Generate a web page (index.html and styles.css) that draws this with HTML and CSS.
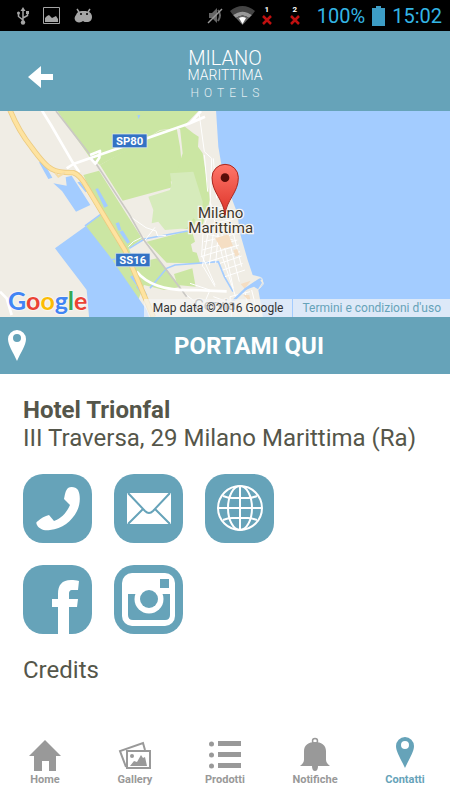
FILE: index.html
```html
<!DOCTYPE html>
<html lang="it">
<head>
  <meta charset="UTF-8">
  <meta name="viewport" content="width=device-width, initial-scale=1.0">
  <title>Contatti - Milano Marittima Hotels</title>
  <link rel="stylesheet" href="styles.css">
</head>
<body>
  <div class="status-bar">
    <div class="status-left">
      <svg width="12" height="18" viewBox="0 0 12 18" fill="none" stroke="#a5a5a5" stroke-width="1.5"><path d="M6 2v14M1.500 7v2.500L6 13M10.500 6v2.500L6 11"/><path d="M3.500 4L6 0l2.500 4z" fill="#a5a5a5" stroke="none"/><circle cx="6" cy="15.500" r="2.200" fill="#a5a5a5" stroke="none"/><circle cx="1.500" cy="6" r="1.500" fill="#a5a5a5" stroke="none"/><path d="M9 4h3v3H9z" fill="#a5a5a5" stroke="none"/></svg>
      <svg width="17" height="17" viewBox="0 0 17 17"><path d="M.5.500h16v16H.5z" fill="none" stroke="#a5a5a5"/><path d="M2 15v-4l2-2 2-1 3 3 2-1 2-1 2 3v3z" fill="#a5a5a5"/></svg>
      <svg width="20" height="16" viewBox="0 0 20 16"><path d="M3 1l2 3M16 1l-2 3" stroke="#a5a5a5" stroke-width="1.500"/><path d="M3 5C5 3 7 3 10 3c5 0 8 2 8 6 0 3-2 5-5 5-2 0-3 0-4-1-2 2-7 2-8-1-1-2 0-4 1-5z" fill="#a5a5a5"/><circle cx="7" cy="6" r="1" fill="#000"/><circle cx="13" cy="6" r="1" fill="#000"/></svg>
    </div>
    <div class="status-right">
      <svg width="16" height="18" viewBox="0 0 16 18"><path d="M2 6h3l5-5v15l-5-5H2z" fill="#666"/><path d="M11 3q4 5 0 11" fill="none" stroke="#666" stroke-width="2"/><path d="M1 16L15 2" stroke="#999" stroke-width="1.500"/></svg>
      <svg width="25" height="19" viewBox="0 0 25 19"><path d="M0 5q12.500-10 25 0l-3 4q-9.500-7-19 0z" fill="#444"/><path d="M3 9q9.500-7 19 0l-3 3q-6.500-5-13 0z" fill="#999"/><path d="M6 12q6.500-5 13 0l-6.500 7z" fill="#666"/><path d="M9 12q3.500-2 7 0l-3.500 6z" fill="#fff"/></svg>
      <div class="sims">
        <div class="sim"><span>1</span><svg width="10" height="10" viewBox="0 0 10 10"><path d="M1 1l8 8M9 1L1 9" stroke="#c01010" stroke-width="2.500"/></svg></div>
        <div class="sim"><span>2</span><svg width="10" height="10" viewBox="0 0 10 10"><path d="M1 1l8 8M9 1L1 9" stroke="#c01010" stroke-width="2.500"/></svg></div>
      </div>
      <span class="battery-text">100%</span>
      <svg width="13" height="20" viewBox="0 0 13 20"><path d="M0 2h4V0h5v2h4v18H0z" fill="#3d9dc5"/></svg>
      <span class="clock">15:02</span>
    </div>
  </div>

  <header class="header">
    <button class="back" aria-label="Indietro"><svg width="26" height="22" viewBox="0 0 26 22"><path d="M0 11L13 0v8h12v6H13v8z" fill="#fff"/></svg></button>
    <div class="logo">
      <span class="logo-milano">MILANO</span>
      <span class="logo-marittima">MARITTIMA</span>
      <span class="logo-hotels">HOTELS</span>
    </div>
  </header>

  <div class="map">
    <svg class="map-drawing" viewBox="0 3 1350 618" preserveAspectRatio="xMidYMid slice">
      <defs>
        <linearGradient id="pin" x1="0" y1="0" x2="0" y2="1"><stop offset="0" stop-color="#ff766a"/><stop offset="1" stop-color="#dc3227"/></linearGradient>
      </defs>
      <path d="M0 0h1350v630H0z" fill="#f0ede5"/>
      <!-- parks -->
      <path d="M170 0H598L560 40 548 60 530 55 480 60 400 110 300 165 268 140z" fill="#cbe6a3"/>
      <path d="M300 165L480 62 530 55 540 110 548 185 512 215 517 232 368 272z" fill="#cbe6a3"/>
      <path d="M555 50l25 20 16 10-2 30 14 20 22 140-22 75-18-25-10 40-65-10-5-40 10-90 28-90-8-75z" fill="#cbe6a3"/>
      <path d="M250 195l47-13 130 205-40 28 15 45 70-15 70 85-50 10-60-15-25 65-30-15L258 348l45-35z" fill="#cbe6a3"/>
      <path d="M440 395l135-35 10 35-12 8 5 22 12 3 10 32-100-2zM522 492l55-17 10 55-55-5z" fill="#cbe6a3"/>
      <path d="M510 190l70-5 28 90-3 70-25-20-20 30-65 5-20-25-20 5 5-40-15-40 65-20 5-20z" fill="#d6ebbb"/>
      <!-- water -->
      <path d="M648 0H1350V630H790L783 585 775 540 790 518 785 502 758 495 743 450 720 370 712 310 697 270 672 210 655 110z" fill="#a3ccff"/>
      <path d="M165 415L258 348 330 440 440 600 450 630H268L260 540 245 520z" fill="#a3ccff"/>
      <path d="M117 157l13-2 27 48-12 4zM160 220l40 7-3-25 18-5 56 88-43 20-42-62zM240 215l22 28-5 4-25-30zM286 237l8-2 30 53-11 5zM347 340l10-3 7 23-9 2zM358 366l10-5 22 35-8 5zM390 500l12-6 15 25-8 7zM408 530l14-10 20 35-8 10zM412 15h9l-5 13z" fill="#a3ccff"/>
      <path d="M255 348l50-37M388 415l45-28 130-24M450 535l50-60 25-10 130-10 18 45 26 45M390 440l-60 10" fill="none" stroke="#a3ccff" stroke-width="5"/>
      <!-- streets of the town -->
      <g fill="none" stroke="#fff" stroke-width="3">
        <path d="M598 15l15 110 22 20-5 150-20 60-5 80 40 90M613 135l10 110M640 145l10 120M632 280l35 160 40 120M612 395l100-25M607 420l105-30M602 440l115-35M610 460l110-35M627 350l-20 120M640 370l-12 95M655 370l-8 90M610 370l90 20M665 370l35 165M680 360l38 155M700 370l25 100M625 300l50-10M630 320l50-8M640 340l60-12M610 470l35 60M570 520l60 20-30 70M540 540l90 70M660 460l65-22M668 480l60-20M675 500l60-20M690 560l5 60M735 545l15 80M755 540l20 80M640 560l55 20M690 560l60-15"/>
        <path d="M388 318l50 35 30 10 5 15 25-2M465 352l-35 45M385 410l15-15 30-15"/>
      </g>
      <path d="M645 385l40-12 14 35-35 8zM700 420l12-3 6 18-12 4zM722 522l30-10-18 24zM730 555h18l5 25z" fill="#f5dec3"/>
      <path d="M697 575l40-38 50-34" fill="none" stroke="#a3ccff" stroke-width="7"/>
      <path d="M735 540l25-20 18-12 8 10-12 20-12-8z" fill="#a3ccff"/>
      <path d="M770 503l15 1 5 18-12 14" fill="none" stroke="#f0ede5" stroke-width="3"/>
      <!-- railway -->
      <path d="M168 3l105 135 115 175 42 75 130 172" fill="none" stroke="#cac8c4" stroke-width="5"/>
      <!-- main roads -->
      <path d="M125 0l28 45 65 112 20 30M200 175l20-13 350-122 33-37M570 40l45-20M270 135l30-12-2 20-12 18-16-18M410 485q50 60 170 55l100 4M0 545l20 20 15 50" fill="none" stroke="#fff" stroke-width="8" stroke-linejoin="round"/>
      <path d="M30 0q25 62 65 112 40 55 60 65 20 12 65 11 20 6 40 43l115 190 85 200" fill="none" stroke="#eccb80" stroke-width="16"/>
      <path d="M30 0q25 62 65 112 40 55 60 65 20 12 65 11 20 6 40 43l115 190 85 200" fill="none" stroke="#fee3a0" stroke-width="11"/>
      <path d="M165 188l10 12 20-12" fill="none" stroke="#f5dca6" stroke-width="6"/>
      <!-- road signs -->
      <path d="M337 72h104v41H337zM347 430h103v40H347z" fill="#3372c4" stroke="#e4edf5" stroke-width="2"/>
      <text class="road" x="389" y="105">SP80</text>
      <text class="road" x="398" y="462">SS16</text>
      <text class="place place-faded" x="645" y="600">Cervia</text>
      <text class="place"><tspan x="662" y="323">Milano</tspan><tspan x="662" y="368">Marittima</tspan></text>
      <path d="M675 316C672 270 636 248 636 203a39 39 0 0 1 79-1C716 248 678 270 675 316z" fill="url(#pin)" stroke="#a9281f" stroke-width="3"/>
      <circle cx="675" cy="203" r="13" fill="#590d09"/>
    </svg>
    <div class="google"><span class="g-blue">G</span><span class="g-red">o</span><span class="g-yellow">o</span><span class="g-blue">g</span><span class="g-green">l</span><span class="g-red">e</span></div>
    <div class="map-credits">
      <span>Map data ©2016 Google</span>
      <a href="#">Termini e condizioni d'uso</a>
    </div>
  </div>

  <button class="directions">
    <svg width="18" height="32" viewBox="0 0 18 32"><path fill-rule="evenodd" d="M9 0a9 9 0 0 1 9 9c0 6-5 13-9 22C5 22 0 15 0 9a9 9 0 0 1 9-9zm0 4a4 4 0 1 0 0 8 4 4 0 0 0 0-8z" fill="#fff"/></svg>
    <span>PORTAMI QUI</span>
  </button>

  <main class="content">
    <h1>Hotel Trionfal</h1>
    <p>III Traversa, 29 Milano Marittima (Ra)</p>
    <div class="links">
      <a href="#" aria-label="Telefono">
        <svg viewBox="0 0 69 69"><path d="M45 14c3-2 8-1 10 2 3 6 2 15-1 21-5 10-15 18-27 19-6 1-11-1-13-5-1-2-1-3 1-4 3-3 7-5 11-6l5 6c8-3 13-9 16-16l-6-6c1-4 1-8 4-11z"/></svg>
      </a>
      <a href="#" aria-label="Email">
        <svg viewBox="0 0 69 69"><path d="M13 19h44v31H13z"/><path d="M14 19l17 18q4 4 8 0l17-18M14 50l15-15M56 50L41 35" fill="none" stroke="#66a3b9" stroke-width="2"/></svg>
      </a>
      <a href="#" aria-label="Sito web">
        <svg viewBox="0 0 69 69"><g fill="none" stroke="#fff" stroke-width="2"><circle cx="35" cy="34" r="22"/><ellipse cx="35" cy="34" rx="12" ry="22"/><path d="M35 12v44M13 34h44M18 22q5 2 9 2h16q4 0 9-2M18 46q5-2 9-2h16q4 0 9 2"/></g></svg>
      </a>
      <a href="#" aria-label="Facebook">
        <svg viewBox="0 0 69 69"><path d="M35 69V42h-6v-8h6v-5c0-9 4-14 13-14 3 0 5 0 8 1l-1 9h-5c-4 0-4 2-4 5v4h9l-1 8h-8v27z"/></svg>
      </a>
      <a href="#" aria-label="Instagram">
        <svg viewBox="0 0 69 69"><rect x="8" y="8" width="53" height="53" rx="10"/><path d="M14 29h42v21q0 5-5 5H19q-5 0-5-5zM46 14h9v9h-9z" fill="#66a3b9"/><circle cx="35" cy="34" r="14.500"/><circle cx="35" cy="34" r="9" fill="#66a3b9"/></svg>
      </a>
    </div>
    <a class="credits" href="#">Credits</a>
  </main>

  <nav class="tabs">
    <a href="#">
      <svg width="32" height="32" viewBox="0 0 32 32"><path d="M16 1l16 16h-5v15h-7V22h-7v10H5V17H0z"/></svg>
      <span>Home</span>
    </a>
    <a href="#">
      <svg width="34" height="32" viewBox="0 0 34 32"><path d="M8 28L2 12 25 4l2 7" fill="none" stroke="#999" stroke-width="2"/><path d="M9 12h23v17H9z" fill="#fff" stroke="#999" stroke-width="2"/><circle cx="14" cy="17" r="2"/><path d="M12 27l4-5 3 1 4-7 2 3 2-1 2 9z"/></svg>
      <span>Gallery</span>
    </a>
    <a href="#">
      <svg width="32" height="32" viewBox="0 0 32 32"><circle cx="2.500" cy="5" r="2.500"/><circle cx="2.500" cy="16" r="2.500"/><circle cx="2.500" cy="27" r="2.500"/><path d="M9 2h23v5H9zM9 13h23v5H9zM9 24h23v5H9z"/></svg>
      <span>Prodotti</span>
    </a>
    <a href="#">
      <svg width="30" height="34" viewBox="0 0 30 34"><circle cx="15" cy="4" r="2.500" fill="none" stroke="#999" stroke-width="1.500"/><path d="M4 14C4 8 9 5 15 5s11 3 11 9v9q0 3 4 6H18q0 5-3 5t-3-5H0q4-3 4-6z"/></svg>
      <span>Notifiche</span>
    </a>
    <a href="#" class="active">
      <svg width="18" height="34" viewBox="0 0 18 34"><path fill-rule="evenodd" d="M9 0a9 9 0 0 1 9 9c0 6-5 13-9 22C5 22 0 15 0 9a9 9 0 0 1 9-9zm0 4a4 4 0 1 0 0 8 4 4 0 0 0 0-8z"/></svg>
      <span>Contatti</span>
    </a>
  </nav>
</body>
</html>
```

FILE: styles.css
```css
* {
  box-sizing: border-box;
}
body {
  font-family: Roboto, Arial, sans-serif;
  background-color: #fff;
  color: #55564a;
  margin: 0;
  min-height: 100vh;
  display: flex;
  flex-direction: column;
}
a {
  color: inherit;
  text-decoration: none;
}
button {
  border: none;
  padding: 0;
  background: none;
  font-family: inherit;
  cursor: pointer;
}
svg {
  display: block;
}

/* status bar */
.status-bar {
  background-color: #000;
  color: #33b5e5;
  height: 31px;
  padding: 0 8px 0 17px;
  display: flex;
  justify-content: space-between;
  align-items: center;
}
.status-left {
  display: flex;
  align-items: center;
  gap: 14px;
}
.status-right {
  display: flex;
  align-items: center;
  gap: 7px;
  font-size: 20px;
}
.sims {
  display: flex;
  gap: 18px;
  margin-right: 10px;
}
.sim {
  display: flex;
  flex-direction: column;
  align-items: center;
  gap: 1px;
  color: #fff;
  font-size: 8px;
  line-height: 8px;
  font-weight: bold;
}

/* header */
.header {
  background-color: #66a3b9;
  height: 80px;
  padding: 0 28px;
  display: grid;
  grid-template-columns: 1fr auto 1fr;
  align-items: center;
}
.back {
  justify-self: start;
  padding-top: 12px;
}
.logo {
  display: flex;
  flex-direction: column;
  align-items: center;
  color: #fff;
  padding-top: 6px;
}
.logo-milano {
  font-size: 20px;
  line-height: 20px;
  font-weight: 300;
}
.logo-marittima {
  font-size: 14px;
  line-height: 14px;
  font-weight: 300;
}
.logo-hotels {
  font-size: 12px;
  line-height: 14px;
  font-weight: 300;
  letter-spacing: 5px;
  padding-left: 5px;
  margin-top: 4px;
  opacity: 0.8;
}

/* map */
.map {
  position: relative;
}
.map-drawing {
  width: 100%;
}
.road {
  font-size: 34px;
  font-weight: bold;
  fill: #fff;
  text-anchor: middle;
}
.place {
  font-size: 45px;
  fill: #40382c;
  stroke: #f7f5f0;
  stroke-width: 8px;
  paint-order: stroke;
  text-anchor: middle;
}
.place-faded {
  fill: #555;
}
.google {
  position: absolute;
  left: 8px;
  bottom: 2px;
  font-family: Lato, sans-serif;
  font-size: 25px;
  line-height: 30px;
  font-weight: bold;
  text-shadow: 0 0 2px #fff, 0 0 2px #fff;
}
.g-blue {
  color: #4285f4;
}
.g-red {
  color: #ea4335;
}
.g-yellow {
  color: #fbbc05;
}
.g-green {
  color: #34a853;
}
.map-credits {
  position: absolute;
  right: 0;
  bottom: 0;
  display: flex;
  font-size: 12px;
  line-height: 18px;
  color: #333;
}
.map-credits span,
.map-credits a {
  background-color: rgba(245, 245, 245, 0.7);
  padding: 0 9px;
}
.map-credits a {
  color: #66a3b9;
  margin-left: 1px;
}

/* directions button */
.directions {
  background-color: #66a3b9;
  color: #fff;
  height: 57px;
  padding: 0 8px;
  display: grid;
  grid-template-columns: 18px 1fr;
  gap: 30px;
  align-items: center;
  font-size: 24px;
  line-height: 28px;
  font-weight: bold;
}

/* contact details */
.content {
  padding: 22px 23px;
  font-size: 24px;
  line-height: 28px;
}
.content h1 {
  margin: 0;
  font-size: 24px;
  line-height: 28px;
}
.content p {
  margin: 0;
}
.links {
  display: grid;
  grid-template-columns: repeat(3, 69px);
  gap: 22px;
  margin: 22px 0;
}
.links a {
  height: 69px;
  border-radius: 20px;
  background-color: #66a3b9;
  overflow: hidden;
}
.links svg {
  width: 100%;
  fill: #fff;
}

/* bottom tabs */
.tabs {
  margin-top: auto;
  display: flex;
  padding-bottom: 13px;
}
.tabs a {
  flex: 1;
  display: flex;
  flex-direction: column;
  align-items: center;
  justify-content: flex-end;
  gap: 2px;
  color: #999;
  fill: #999;
  font-size: 11px;
  line-height: 14px;
  font-weight: bold;
}
.tabs .active {
  color: #66a3b9;
  fill: #66a3b9;
}
```
